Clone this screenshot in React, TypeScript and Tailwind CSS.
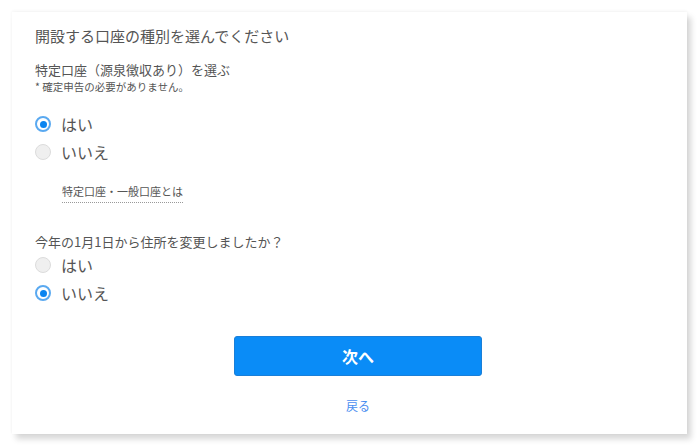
import React from "react";

const font = { fontFamily: '"Noto Sans CJK JP", "Noto Sans", sans-serif' };

interface RadioRowProps {
  label: string;
  checked: boolean;
}

const RadioRow: React.FC<RadioRowProps> = ({ label, checked }) => {
  return (
    <div className="flex items-center h-[28px]">
      {checked ? (
        <span className="w-[16px] h-[16px] rounded-full border-[2px] border-[#5aa9f0] bg-white flex items-center justify-center">
          <span className="w-[7px] h-[7px] rounded-full bg-[#0a84f0]"></span>
        </span>
      ) : (
        <span className="w-[16px] h-[16px] rounded-full border border-[#dcdcdc] bg-[#efefef]"></span>
      )}
      <span className="ml-[10px] text-[16px] leading-[22px] text-[#555]">{label}</span>
    </div>
  );
};

export default function App() {
  return (
    <div className="w-[700px] h-[448px] bg-white pt-[12px] pl-[12px]" style={font}>
      <div className="w-[675px] h-[422px] bg-white shadow-[4px_5px_6px_rgba(0,0,0,0.16),0_-1px_3px_rgba(0,0,0,0.05)] pt-[13px] pl-[23px] pr-[6px] flex flex-col">
        <h1 className="text-[15px] leading-[22px] text-[#555]">開設する口座の種別を選んでください</h1>
        <p className="mt-[14px] text-[13px] leading-[18px] text-[#555]">特定口座（源泉徴収あり）を選ぶ</p>
        <p className="mt-[1px] text-[10.5px] leading-[14px] text-[#555]">* 確定申告の必要がありません。</p>

        <div className="mt-[16px]">
          <RadioRow label="はい" checked={true} />
          <RadioRow label="いいえ" checked={false} />
        </div>

        <div className="mt-[11px] ml-[27px]">
          <span className="inline-block text-[11px] leading-[16px] text-[#555] pb-[3px] border-b border-dotted border-[#999]">
            特定口座・一般口座とは
          </span>
        </div>

        <p className="mt-[30px] text-[13px] leading-[18px] text-[#555]">今年の1月1日から住所を変更しましたか？</p>
        <div>
          <RadioRow label="はい" checked={false} />
          <RadioRow label="いいえ" checked={true} />
        </div>

        <div className="mt-[29px] flex flex-col items-center">
          <button className="w-[248px] h-[40px] rounded-[3px] bg-[#0a8cf7] border border-[#1a7fd8] text-white text-[16px] font-bold">
            次へ
          </button>
          <a className="mt-[22px] text-[12px] leading-[16px] text-[#4a8ef0]">戻る</a>
        </div>
      </div>
    </div>
  );
}
